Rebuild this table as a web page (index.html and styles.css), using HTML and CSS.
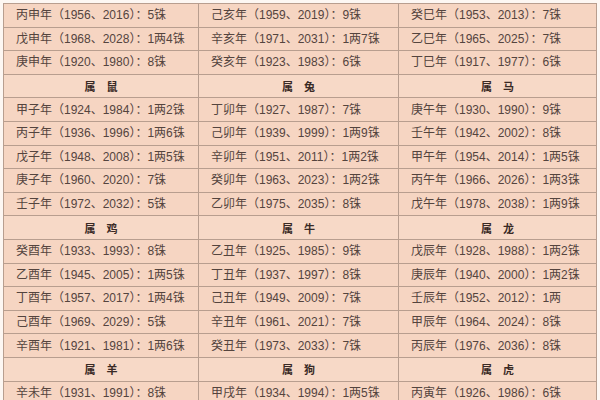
FILE: index.html
```html
<!DOCTYPE html>
<html lang="zh">
<head>
<meta charset="utf-8">
<link rel="stylesheet" href="styles.css">
</head>
<body>
<div class="wrap">
<table class="chart">
<colgroup><col class="c1"><col class="c2"><col class="c3"></colgroup>
<tbody>
<tr><td>丙申年（1956、2016）：5铢</td><td>己亥年（1959、2019）：9铢</td><td>癸巳年（1953、2013）：7铢</td></tr>
<tr><td>戊申年（1968、2028）：1两4铢</td><td>辛亥年（1971、2031）：1两7铢</td><td>乙巳年（1965、2025）：7铢</td></tr>
<tr><td>庚申年（1920、1980）：8铢</td><td>癸亥年（1923、1983）：6铢</td><td>丁巳年（1917、1977）：6铢</td></tr>
<tr class="head"><td>属　鼠</td><td>属　兔</td><td>属　马</td></tr>
<tr><td>甲子年（1924、1984）：1两2铢</td><td>丁卯年（1927、1987）：7铢</td><td>庚午年（1930、1990）：9铢</td></tr>
<tr><td>丙子年（1936、1996）：1两6铢</td><td>己卯年（1939、1999）：1两9铢</td><td>壬午年（1942、2002）：8铢</td></tr>
<tr><td>戊子年（1948、2008）：1两5铢</td><td>辛卯年（1951、2011）：1两2铢</td><td>甲午年（1954、2014）：1两5铢</td></tr>
<tr><td>庚子年（1960、2020）：7铢</td><td>癸卯年（1963、2023）：1两2铢</td><td>丙午年（1966、2026）：1两3铢</td></tr>
<tr><td>壬子年（1972、2032）：5铢</td><td>乙卯年（1975、2035）：8铢</td><td>戊午年（1978、2038）：1两9铢</td></tr>
<tr class="head"><td>属　鸡</td><td>属　牛</td><td>属　龙</td></tr>
<tr><td>癸酉年（1933、1993）：8铢</td><td>乙丑年（1925、1985）：9铢</td><td>戊辰年（1928、1988）：1两2铢</td></tr>
<tr><td>乙酉年（1945、2005）：1两5铢</td><td>丁丑年（1937、1997）：8铢</td><td>庚辰年（1940、2000）：1两2铢</td></tr>
<tr><td>丁酉年（1957、2017）：1两4铢</td><td>己丑年（1949、2009）：7铢</td><td>壬辰年（1952、2012）：1两</td></tr>
<tr><td>己酉年（1969、2029）：5铢</td><td>辛丑年（1961、2021）：7铢</td><td>甲辰年（1964、2024）：8铢</td></tr>
<tr><td>辛酉年（1921、1981）：1两6铢</td><td>癸丑年（1973、2033）：7铢</td><td>丙辰年（1976、2036）：8铢</td></tr>
<tr class="head"><td>属　羊</td><td>属　狗</td><td>属　虎</td></tr>
<tr><td>辛未年（1931、1991）：8铢</td><td>甲戌年（1934、1994）：1两5铢</td><td>丙寅年（1926、1986）：6铢</td></tr>
</tbody>
</table>
</div>
</body>
</html>
```
FILE: styles.css
```css
html, body {
  margin: 0;
  padding: 0;
  background: #fdf7f3;
  overflow: hidden;
}
.wrap {
  padding: 3px 0 0 3px;
  width: 600px;
  height: 400px;
  box-sizing: border-box;
}
.chart {
  border-collapse: collapse;
  table-layout: fixed;
  width: 593px;
  font-family: "Liberation Sans", "Noto Sans CJK SC", sans-serif;
  font-size: 12px;
  color: #54443e;
}
.c1 { width: 195px; }
.c2 { width: 200px; }
.c3 { width: 198px; }
.chart td {
  height: 23.6px;
  padding: 0 0 0 12px;
  border: 1px solid #b89e8f;
  background: #f6d5c2;
  white-space: nowrap;
  box-sizing: border-box;
  line-height: 22px;
}
.chart tr.head td {
  text-align: center;
  padding: 0;
  font-weight: bold;
  font-size: 11px;
  color: #3a2a25;
  background: #f7d9c7;
  font-family: "Noto Sans CJK SC", sans-serif;
}
```
